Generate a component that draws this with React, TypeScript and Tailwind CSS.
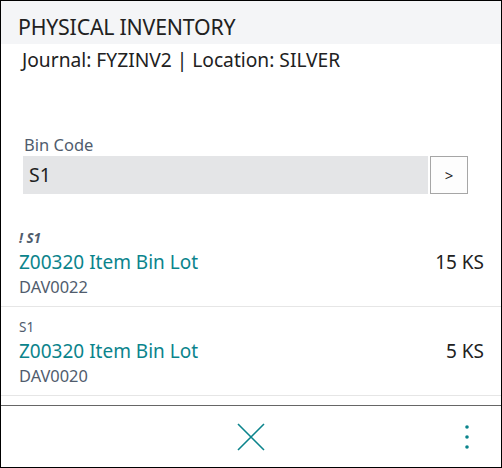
import React from "react"

const items = [
  { bin: "! S1", flag: true, title: "Z00320 Item Bin Lot", lot: "DAV0022", qty: "15 KS" },
  { bin: "S1", flag: false, title: "Z00320 Item Bin Lot", lot: "DAV0020", qty: "5 KS" },
]

export default function App() {
  return (
    <div
      className="w-[502px] h-[468px] border border-black bg-white flex flex-col text-[#212121] overflow-hidden"
      style={{ fontFamily: "'Noto Sans', 'Open Sans', sans-serif" }}
    >
      {/* header */}
      <div className="h-[43px] bg-[#f4f5f7] pl-[17px] flex items-center pt-[9px]">
        <span className="text-[21.3px] leading-none tracking-[-0.2px]">PHYSICAL INVENTORY</span>
      </div>
      <div className="pl-[21px] pt-[4px] text-[19.2px] leading-[24px]">Journal: FYZINV2 | Location: SILVER</div>

      {/* bin code */}
      <div className="mt-[62px] pl-[22px] pr-[33px]">
        <div className="text-[16.5px] leading-[22px] text-[#505c6d] pl-[1px]">Bin Code</div>
        <div className="flex gap-[2px]">
          <div className="flex-1 h-[38px] bg-[#e4e5e7] flex items-center pl-[6px] text-[19.5px]">S1</div>
          <button className="w-[38px] h-[38px] border border-[#a6a6a6] bg-[#fdfdfd] flex items-center justify-center text-[15px] text-[#212121]">
            &gt;
          </button>
        </div>
      </div>

      {/* list */}
      <div className="mt-[24px]">
        {items.map((it, i) => (
          <div key={i} className="border-b border-[#e6e6e6] pl-[18px] pr-[17px] pt-[10px] pb-[8px]">
            <div
              className={
                it.flag
                  ? "text-[13.5px] leading-[20px] font-bold italic text-[#505c6d]"
                  : "text-[13.5px] leading-[20px] text-[#505c6d]"
              }
            >
              {it.bin}
            </div>
            <div className="flex justify-between items-baseline">
              <span className="text-[19px] leading-[28px] text-[#0b848c]">{it.title}</span>
              <span className="text-[19px] leading-[28px]">{it.qty}</span>
            </div>
            <div className="text-[16.4px] leading-[22px] text-[#505c6d]">{it.lot}</div>
          </div>
        ))}
      </div>

      <div className="flex-1" />

      {/* footer */}
      <div className="h-[62px] border-t border-[#666666] grid grid-cols-3 items-center">
        <div />
        <div className="flex justify-center">
          <svg width="28" height="28" viewBox="0 0 28 28" fill="none" stroke="#0b848c" strokeWidth="1.6">
            <path d="M1 1 L27 27 M27 1 L1 27" />
          </svg>
        </div>
        <div className="flex justify-end pr-[31px]">
          <svg width="6" height="26" viewBox="0 0 6 26" fill="#0b848c">
            <circle cx="3" cy="3" r="1.8" />
            <circle cx="3" cy="13" r="1.8" />
            <circle cx="3" cy="23" r="1.8" />
          </svg>
        </div>
      </div>
    </div>
  )
}
